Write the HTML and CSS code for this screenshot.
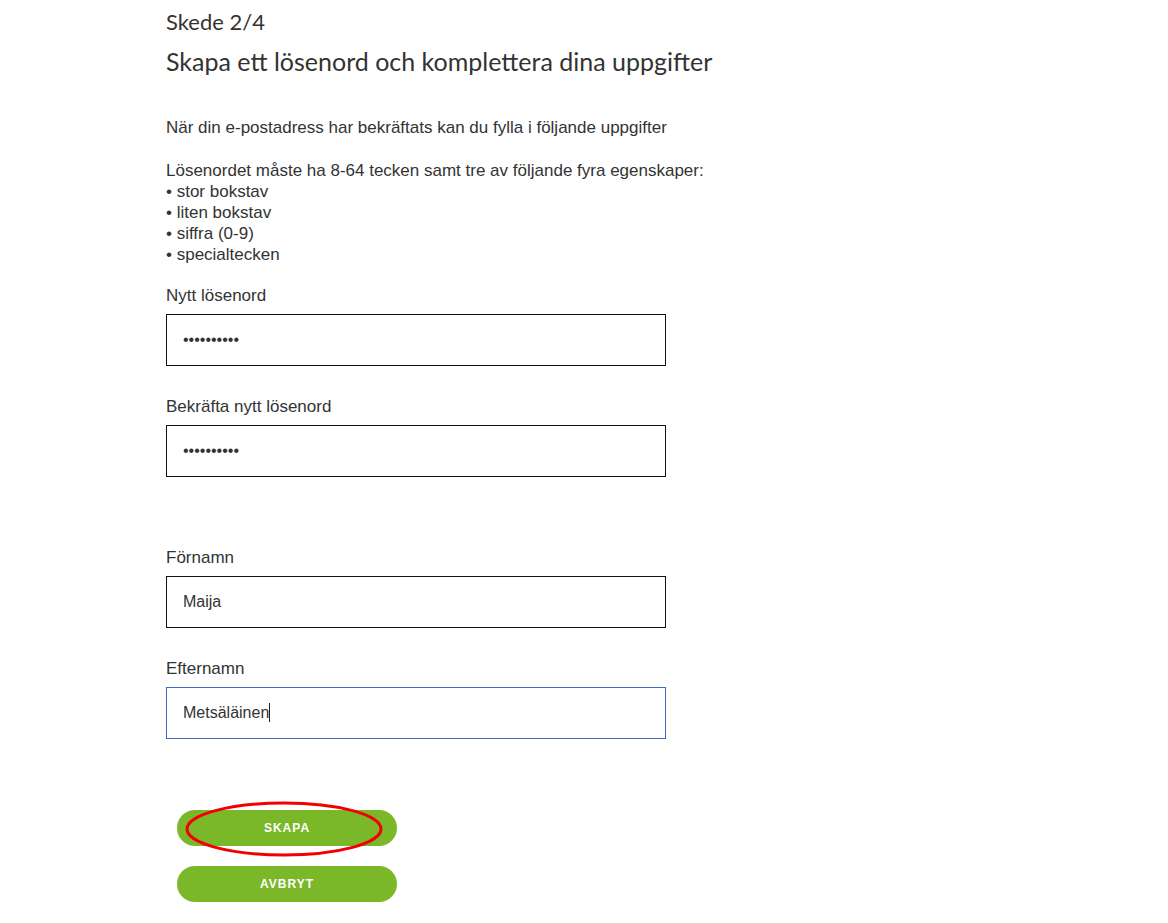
FILE: index.html
```html
<!DOCTYPE html>
<html>
<head>
    <meta name="viewport" content="width=device-width, initial-scale=1.0">
    <link rel="stylesheet" href="styles.css">
</head>
<body>
    <div class="sida">
        <h1 class="skede">Skede 2/4</h1>
        <h2 class="rubrik">Skapa ett lösenord och komplettera dina uppgifter</h2>

        <p class="intro">När din e-postadress har bekräftats kan du fylla i följande uppgifter</p>

        <p class="regler">
            Lösenordet måste ha 8-64 tecken samt tre av följande fyra egenskaper:<br>
            • stor bokstav<br>
            • liten bokstav<br>
            • siffra (0-9)<br>
            • specialtecken
        </p>

        <div class="falt">
            <label class="etikett" for="losen">Nytt lösenord</label>
            <input class="inmatning" id="losen" type="password" value="abcdefghij">
        </div>

        <div class="falt">
            <label class="etikett" for="losen2">Bekräfta nytt lösenord</label>
            <input class="inmatning" id="losen2" type="password" value="abcdefghij">
        </div>

        <div class="falt falt-namn">
            <label class="etikett" for="fornamn">Förnamn</label>
            <input class="inmatning" id="fornamn" type="text" value="Maija">
        </div>

        <div class="falt">
            <label class="etikett" for="efternamn">Efternamn</label>
            <div class="inmatning aktiv">Metsäläinen<span class="markor"></span></div>
        </div>

        <div class="knappar">
            <div class="knapp-ram">
                <button class="knapp">SKAPA</button>
                <svg class="ring" width="200" height="58" viewBox="0 0 200 58">
                    <ellipse cx="100" cy="29" rx="97" ry="26" fill="none" stroke="#f20000" stroke-width="3"/>
                </svg>
            </div>
            <button class="knapp">AVBRYT</button>
        </div>
    </div>
</body>
</html>
```

FILE: styles.css
```css
        body {
            margin: 0;
            background-color: #fff;
            color: #333;
            font-family: "Liberation Sans", Arial, sans-serif;
        }

        .sida {
            width: 836px;
            margin: 0 auto;
            padding-top: 8px;
        }

        .skede {
            margin: 0;
            font-family: Lato, "Noto Sans", sans-serif;
            font-weight: 400;
            font-size: 22px;
            line-height: 28px;
        }

        .rubrik {
            margin: 10px 0 0 0;
            font-family: Lato, "Noto Sans", sans-serif;
            font-weight: 400;
            font-size: 25px;
            line-height: 31px;
        }

        .intro {
            margin: 40px 0 0 0;
            font-size: 17px;
            line-height: 21px;
        }

        .regler {
            margin: 22px 0 0 0;
            font-size: 17px;
            line-height: 21px;
        }

        .falt {
            margin-top: 30px;
        }

        .regler + .falt {
            margin-top: 20px;
        }

        .falt-namn {
            margin-top: 70px;
        }

        .etikett {
            display: block;
            font-size: 17px;
            line-height: 21px;
            margin-bottom: 8px;
        }

        .inmatning {
            display: block;
            box-sizing: border-box;
            width: 500px;
            height: 52px;
            padding: 0 16px;
            border: 1px solid #111;
            border-radius: 0;
            font-family: "Liberation Sans", Arial, sans-serif;
            font-size: 16px;
            line-height: 50px;
            color: #333;
            outline: none;
        }

        .aktiv {
            border-color: #3b6cc5;
        }

        .markor {
            display: inline-block;
            width: 1px;
            height: 19px;
            background-color: #222;
            vertical-align: -4px;
        }

        .knappar {
            margin: 71px 0 0 11px;
            display: flex;
            flex-direction: column;
            gap: 20px;
        }

        .knapp-ram {
            position: relative;
            width: 220px;
        }

        .knapp {
            width: 220px;
            height: 36px;
            border: none;
            border-radius: 18px;
            background-color: #7ab829;
            color: white;
            font-family: "Liberation Sans", Arial, sans-serif;
            font-weight: bold;
            font-size: 12px;
            letter-spacing: 1px;
            cursor: pointer;
        }

        .ring {
            position: absolute;
            left: 7px;
            top: -10px;
        }
```
